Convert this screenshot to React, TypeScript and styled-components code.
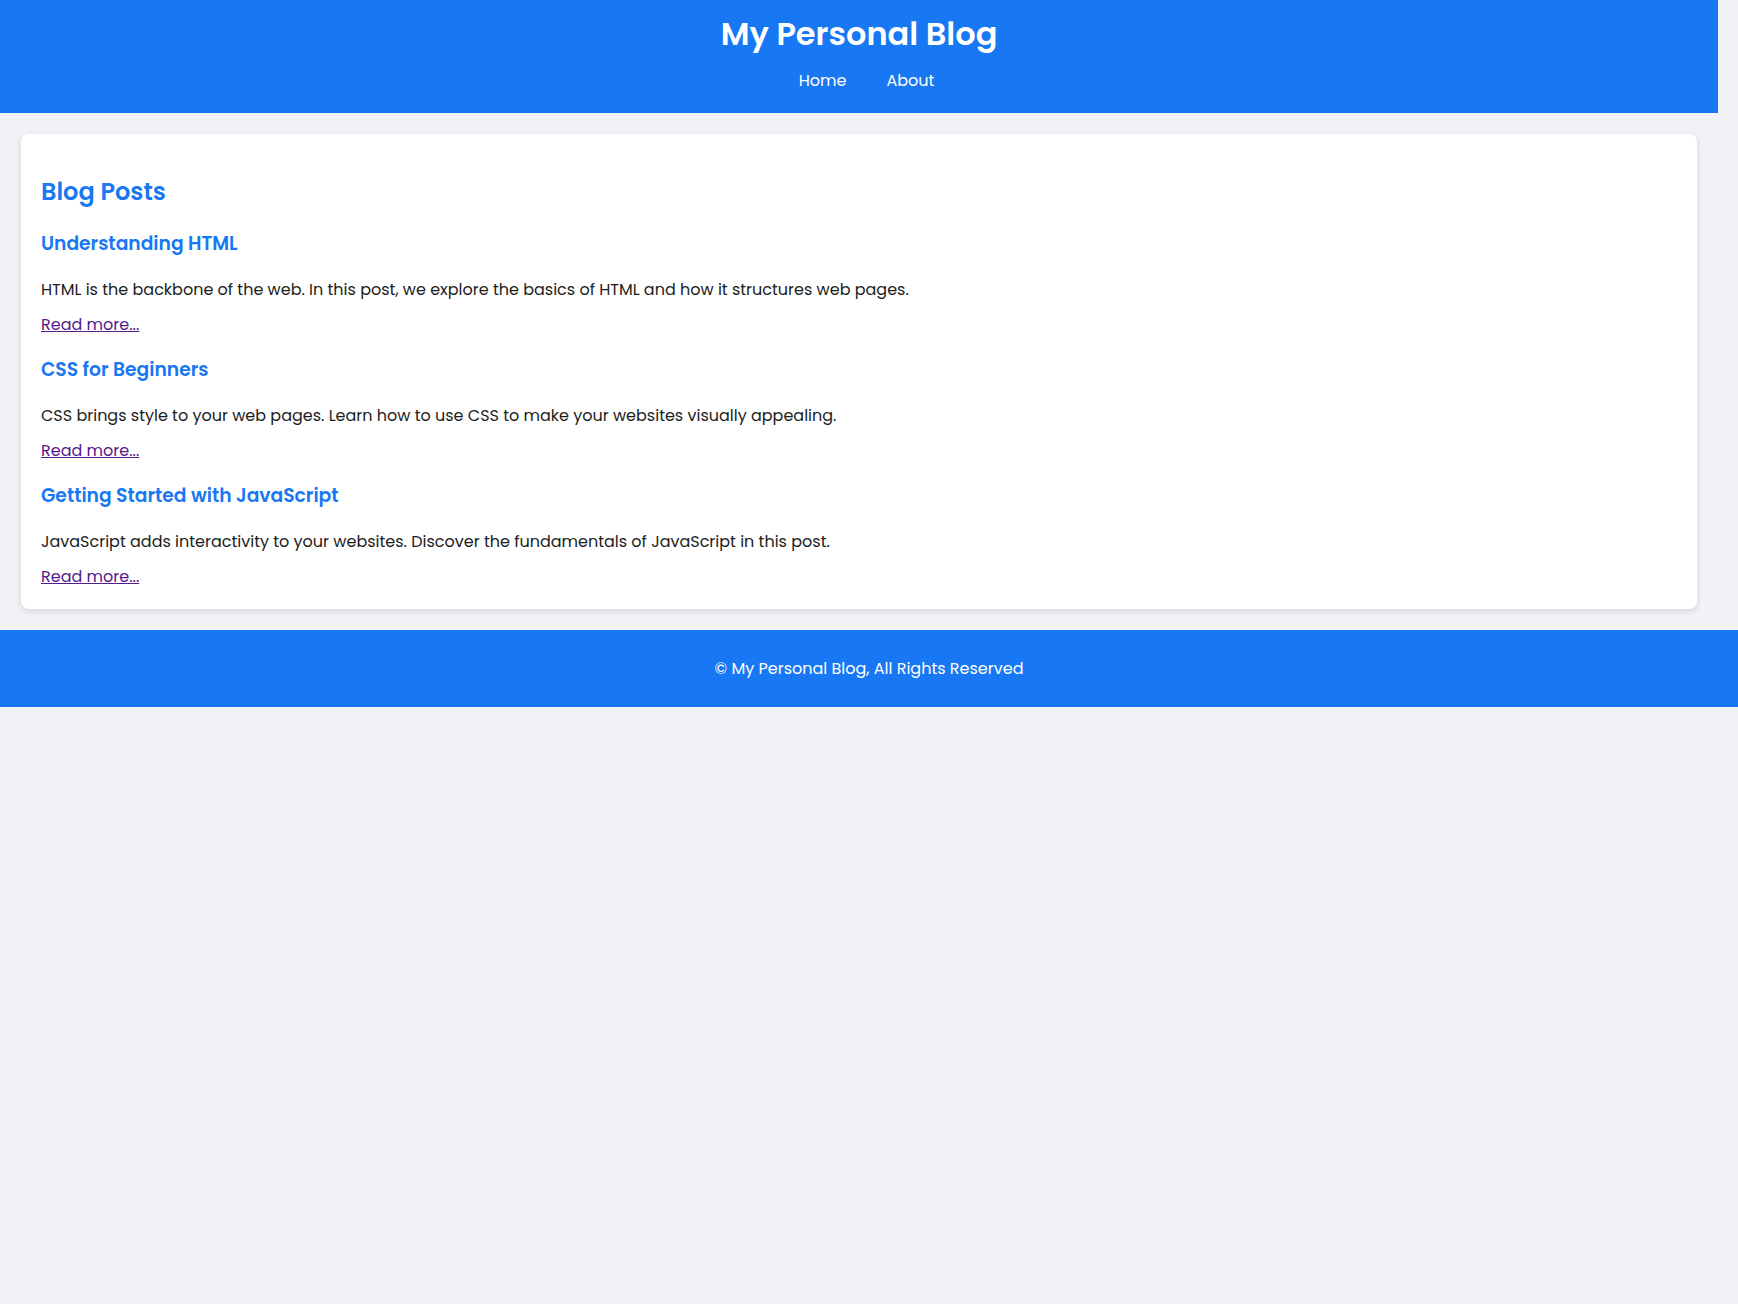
import React from "react";
import styled, { createGlobalStyle } from "styled-components";

const GlobalStyle = createGlobalStyle`
  html, body {
    margin: 0;
    padding: 0;
    background: #f0f2f5;
  }
  body {
    font-family: "Poppins", "Inter", "Liberation Sans", sans-serif;
    color: #1c1e21;
  }
  * { box-sizing: border-box; }
`;

const Header = styled.header`
  width: calc(100% - 20px);
  background: #1877f2;
  color: #ffffff;
  display: flex;
  flex-direction: column;
  align-items: center;
  padding: 14px 0 20px;
  gap: 15px;
`;

const Title = styled.h1`
  margin: 0;
  font-size: 32px;
  line-height: 40px;
  font-weight: 600;
`;

const Nav = styled.nav`
  display: flex;
  gap: 40px;
  padding-left: 15px;
`;

const NavLink = styled.a`
  color: #ffffff;
  text-decoration: none;
  font-size: 16px;
  line-height: 24px;
  font-weight: 400;
`;

const Card = styled.main`
  margin: 21px 0 0 21px;
  width: 1676px;
  background: #ffffff;
  border-radius: 8px;
  box-shadow: 0 2px 6px rgba(0, 0, 0, 0.12);
  padding: 42px 20px 19px;
`;

const SectionTitle = styled.h2`
  margin: 0;
  color: #1877f2;
  font-size: 24px;
  line-height: 32px;
  font-weight: 600;
`;

const Post = styled.article<{ $first?: boolean }>`
  display: flex;
  flex-direction: column;
  align-items: flex-start;
  margin-top: ${(p) => (p.$first ? "22px" : "18px")};
`;

const PostTitle = styled.h3`
  margin: 0;
  color: #1877f2;
  font-size: 18.72px;
  line-height: 28px;
  font-weight: 600;
`;

const PostText = styled.p`
  margin: 19px 0 0;
  font-size: 16px;
  line-height: 26px;
`;

const ReadMore = styled.a`
  margin-top: 9px;
  color: #551a8b;
  font-size: 16px;
  line-height: 26px;
  text-decoration: underline;
`;

const Footer = styled.footer`
  margin-top: 21px;
  background: #1877f2;
  color: #ffffff;
  text-align: center;
  padding: 26px 0 25px;
  font-size: 16px;
  line-height: 26px;
`;

const posts = [
  {
    title: "Understanding HTML",
    text: "HTML is the backbone of the web. In this post, we explore the basics of HTML and how it structures web pages.",
  },
  {
    title: "CSS for Beginners",
    text: "CSS brings style to your web pages. Learn how to use CSS to make your websites visually appealing.",
  },
  {
    title: "Getting Started with JavaScript",
    text: "JavaScript adds interactivity to your websites. Discover the fundamentals of JavaScript in this post.",
  },
];

export default function App() {
  return (
    <>
      <GlobalStyle />
      <Header>
        <Title>My Personal Blog</Title>
        <Nav>
          <NavLink href="#">Home</NavLink>
          <NavLink href="#">About</NavLink>
        </Nav>
      </Header>
      <Card>
        <SectionTitle>Blog Posts</SectionTitle>
        {posts.map((p, i) => (
          <Post key={p.title} $first={i === 0}>
            <PostTitle>{p.title}</PostTitle>
            <PostText>{p.text}</PostText>
            <ReadMore href="#">Read more...</ReadMore>
          </Post>
        ))}
      </Card>
      <Footer>© My Personal Blog, All Rights Reserved</Footer>
    </>
  );
}
